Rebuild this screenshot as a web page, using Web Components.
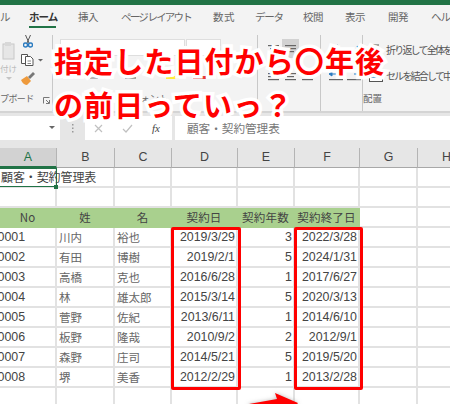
<!DOCTYPE html>
<html lang="ja">
<head>
<meta charset="utf-8">
<style>
  html, body { margin: 0; padding: 0; width: 450px; height: 404px; overflow: hidden; background: #fff; }
  body { font-family: "Noto Sans CJK JP", "Liberation Sans", sans-serif; position: relative; }
</style>
</head>
<body>
  <excel-tabs></excel-tabs>
  <excel-ribbon></excel-ribbon>
  <formula-bar>顧客・契約管理表</formula-bar>
  <excel-sheet></excel-sheet>
  <slide-callout>
    <span>指定した日付から〇年後</span>
    <span>の前日っていっ？</span>
  </slide-callout>
<script>
  const JP = `"Noto Sans CJK JP", "Liberation Sans", sans-serif`;

  class ExcelTabs extends HTMLElement {
    constructor() {
      super();
      this.attachShadow({mode: "open"});
      // [label, gap before, width, letter spacing]
      const tabs = [
        ["ホーム", 19, 27, -1], ["挿入", 22, 20, -.4], ["ページ レイアウト", 23, 68, -1.8], ["数式", 24, 22, .4],
        ["データ", 20, 26, -1.3], ["校閲", 22, 20, -.4], ["表示", 22, 20, -.4], ["開発", 23, 20, -.4], ["ヘルプ", 23, 27, -1]
      ];
      const items = tabs.map(([t, m, w, s], i) =>
        `<span class="${i === 0 ? "on" : ""}" style="margin-left:${m}px;width:${w}px;letter-spacing:${s}px">${t}</span>`).join("");
      this.shadowRoot.innerHTML = `
      <style>
        :host { display: block; height: 33px; box-sizing: border-box; border-top: 5px solid #217346; background: #f3f3f3; }
        nav { display: flex; height: 28px; font: 10.500px ${JP}; color: #666; white-space: nowrap; overflow: hidden; }
        span { position: relative; padding-top: 4px; line-height: 16px; flex: none; }
        .on { font-weight: 700; color: #333; }
        .on::after { content: ""; position: absolute; left: 0; right: 0; top: 21px; height: 2px; background: #217346; }
      </style>
      <nav>
        <span style="margin-left:-10px;width:20px;letter-spacing:-.5px">イル</span>
        ${items}
      </nav>`;
    }
  }
  customElements.define("excel-tabs", ExcelTabs);

  class RibbonGroup extends HTMLElement {
    constructor() {
      super();
      this.attachShadow({mode: "open"});
      this.shadowRoot.innerHTML = `
      <style>
        :host { display: flex; flex-direction: column; flex: none; box-sizing: border-box; height: 76px; border-right: 1px solid #c8c8c8; position: relative; }
        :host([last]) { border-right: 0; }
        .body { flex: 1; display: flex; min-height: 0; overflow: hidden; }
        .label { height: 13px; margin-bottom: 6px; font: 9.500px/13px ${JP}; color: #666; white-space: nowrap; }
      </style>
      <div class="body"><slot></slot></div>
      <div class="label" id="label"></div>`;
    }
    connectedCallback() {
      const label = this.shadowRoot.getElementById("label");
      label.textContent = this.getAttribute("label") || "";
      label.style.cssText += this.getAttribute("label-style") || "";
    }
  }
  customElements.define("ribbon-group", RibbonGroup);

  class ExcelRibbon extends HTMLElement {
    constructor() {
      super();
      this.attachShadow({mode: "open"});
      const line = (x, y, w) => `<rect x="${x}" y="${y}" width="${w}" height="1.2" fill="#666"/>`;
      this.shadowRoot.innerHTML = `
      <style>
        :host { display: flex; height: 80px; box-sizing: border-box; padding-top: 2px; background: #f3f3f3; border-bottom: 2px solid #d4d4d4; overflow: hidden; }
        svg { display: block; flex: none; }
        .clip { display: grid; grid-template-columns: 17px 28px; }
        .paste { display: flex; flex-direction: column; align-items: center; padding: 7px 0 0 0; font: 8.500px/12px ${JP}; color: #bbb; white-space: nowrap; }
        .tools { display: flex; flex-direction: column; gap: 6px; padding: 0 0 0 4px; }
        .launch { position: absolute; left: 43px; top: 62px; }
        .font { display: flex; flex-direction: column; gap: 5px; padding: 4px 0 0 7px; }
        .boxes { display: flex; gap: 1px; }
        .box { height: 15px; background: #fff; border: 1px solid #dedede; }
        .marks { display: flex; align-items: flex-end; margin-top: 9px; }
        .marks i { display: block; width: 13px; height: 3px; background: #ffeb3b; margin-left: 26px; }
        .marks i + i { background: #e53935; margin-left: 14px; }
        .align { display: grid; grid-template-columns: 17px 17px 17px; grid-auto-rows: 19px; row-gap: 9px; padding: 4px 0 0 7px; }
        .align div { display: flex; align-items: center; justify-content: center; }
        .on { background: #d2d2d2; }
        .orient { display: grid; grid-auto-rows: 19px; row-gap: 9px; padding: 4px 0 0 6px; grid-template-columns: 18px 18px; }
        .orient div { display: flex; align-items: center; justify-content: center; }
        .wrap { display: flex; flex-direction: column; gap: 10px; padding: 7px 0 0 6px; font: 10px/16px ${JP}; letter-spacing: -1.800px; color: #555; white-space: nowrap; }
        .wrap div { display: flex; gap: 3px; align-items: center; }
      </style>
      <ribbon-group label="プボード" style="width:53px" label-style="font-size:9px;letter-spacing:-.6px">
        <div class="clip">
          <div class="paste">
            <svg width="14" height="18" viewBox="0 0 14 18"><rect x="1" y="2" width="11" height="15" fill="#e6e6e6" stroke="#c8c8c8"/><rect x="3" y="0" width="6" height="4" fill="#d8d8d8"/></svg>
            <span style="margin-top:2px">付け</span>
            <svg width="6" height="4" viewBox="0 0 6 4" style="margin-top:3px"><path d="M0 0h6L3 3z" fill="#c4c4c4"/></svg>
          </div>
          <div class="tools">
            <svg width="10" height="13" viewBox="0 0 10 13" style="margin-left:2px"><path d="M2.500 0l3.500 8M7.500 0L4 8" stroke="#555" stroke-width="1" fill="none"/><circle cx="2.500" cy="10" r="2" fill="none" stroke="#2a7bc0" stroke-width="1.400"/><circle cx="7.500" cy="10" r="2" fill="none" stroke="#2a7bc0" stroke-width="1.400"/></svg>
            <svg width="22" height="12" viewBox="0 0 22 12"><path d="M.5.5h6v9h-6z" fill="#fff" stroke="#555"/><path d="M4.500 2.500h5l2.500 2.500v6.500h-7.500z" fill="#fff" stroke="#555"/><path d="M6.500 7h3.500M6.500 9.500h3.500" stroke="#888"/><path d="M17 5h5l-2.500 2.500z" fill="#666"/></svg>
            <svg width="14" height="13" viewBox="0 0 14 13"><path d="M0 8l6-4 4 5-4 4C4 13 1 11 0 8z" fill="#ee9a3c"/><path d="M7 5l5-5 2 2-5 5z" fill="#777"/></svg>
          </div>
        </div>
        <svg class="launch" width="7" height="7" viewBox="0 0 7 7"><path d="M.5 6.500v-6h6M6.500 3v3.500H3M3 3l3 3" fill="none" stroke="#777"/></svg>
      </ribbon-group>
      <ribbon-group label="ォント" style="width:205px" label-style="padding-left:87px">
        <div class="font">
          <div class="boxes">
            <div class="box" style="width:123px"></div>
            <div class="box" style="width:33px"></div>
          </div>
          <div class="marks">
            <svg width="80" height="9" viewBox="0 0 80 9"><path d="M3 7h8M30 8h8" stroke="#777"/><path d="M47 2h5l-2.500 2.500z" fill="#666"/><path d="M65.500 1.500h10v6h-10z" fill="none" stroke="#aaa"/><path d="M65 8h11" stroke="#555"/></svg>
            <i></i><i></i>
          </div>
        </div>
      </ribbon-group>
      <ribbon-group style="width:63px">
        <div class="align">
          <div><svg width="11" height="8" viewBox="0 0 11 8">${line(0,0,11)}${line(2,3,7)}${line(0,6,11)}</svg></div>
          <div class="on"><svg width="11" height="8" viewBox="0 0 11 8">${line(0,0,11)}${line(0,3,11)}${line(2,6,7)}</svg></div>
          <div></div>
          <div><svg width="11" height="8" viewBox="0 0 11 8">${line(0,0,11)}${line(0,3,7)}${line(0,6,11)}</svg></div>
          <div><svg width="11" height="8" viewBox="0 0 11 8">${line(0,0,11)}${line(2,3,7)}${line(0,6,11)}</svg></div>
          <div><svg width="11" height="8" viewBox="0 0 11 8">${line(0,0,11)}${line(4,3,7)}${line(0,6,11)}</svg></div>
        </div>
      </ribbon-group>
      <ribbon-group style="width:42px">
        <div class="orient">
          <div><svg width="14" height="12" viewBox="0 0 14 12"><path d="M1 10L9 2" stroke="#2a7bc0" stroke-width="1.200"/><path d="M2 6l3-4 2 5" fill="none" stroke="#777"/></svg></div>
          <div><svg width="10" height="8" viewBox="0 0 10 8"><path d="M0 4h5M8 1l2 3-2 3" stroke="#2a7bc0" stroke-width="1.200" fill="none"/></svg></div>
          <div><svg width="14" height="9" viewBox="0 0 14 9"><path d="M0 2l3-2v4zM3 2h4" fill="#2a7bc0" stroke="#2a7bc0"/>${line(0,7,14)}</svg></div>
          <div><svg width="14" height="9" viewBox="0 0 14 9"><path d="M14 2l-3-2v4zM11 2H7" fill="#2a7bc0" stroke="#2a7bc0"/>${line(0,7,14)}</svg></div>
        </div>
      </ribbon-group>
      <ribbon-group last label="配置" style="width:87px">
        <div class="wrap">
          <div><svg width="14" height="14" viewBox="0 0 14 14"><path d="M1 2h9M1 6h10c3 0 3 5 0 5H8" fill="none" stroke="#555"/><path d="M9 9l-2 2 2 2" fill="none" stroke="#2a7bc0"/></svg>折り返して全体を</div>
          <div><svg width="14" height="12" viewBox="0 0 14 12"><rect x=".5" y="3.500" width="13" height="8" fill="#fff" stroke="#555"/><path d="M2 7h10" stroke="#2a7bc0" stroke-width="1.400"/></svg>セルを結合して中</div>
        </div>
      </ribbon-group>`;
    }
  }
  customElements.define("excel-ribbon", ExcelRibbon);

  class FormulaBar extends HTMLElement {
    constructor() {
      super();
      this.attachShadow({mode: "open"});
      this.shadowRoot.innerHTML = `
      <style>
        :host { display: flex; height: 35px; box-sizing: border-box; padding: 3px 0 8px; background: #e6e6e6; color: #777; font: 11.600px/24px ${JP}; }
        .name { width: 60px; background: #fff; display: flex; align-items: center; justify-content: flex-end; padding-right: 5px; box-sizing: border-box; }
        .dots { width: 25px; display: flex; align-items: center; justify-content: center; }
        .fn { width: 87px; margin-right: 3px; background: #fff; display: flex; align-items: center; padding-left: 9px; box-sizing: border-box; gap: 19px; }
        .fn svg { flex: none; }
        .fx { font: italic 11px "Liberation Serif", serif; color: #444; }
        .text { flex: 1; background: #fff; padding-left: 12px; white-space: nowrap; overflow: hidden; }
      </style>
      <div class="name"><svg width="6" height="4" viewBox="0 0 6 4"><path d="M0 0h6L3 3z" fill="#666"/></svg></div>
      <div class="dots"><svg width="2" height="9" viewBox="0 0 2 9"><path d="M0 0h1.500v1.500H0zM0 3.500h1.500V5H0zM0 7h1.500v1.500H0z" fill="#999"/></svg></div>
      <div class="fn">
        <svg width="9" height="9" viewBox="0 0 9 9"><path d="M1 1l7 7M8 1L1 8" stroke="#c0c0c0" stroke-width="1.200"/></svg>
        <svg width="11" height="9" viewBox="0 0 11 9"><path d="M1 5l3 3 6-7" fill="none" stroke="#c0c0c0" stroke-width="1.200"/></svg>
        <span class="fx">fx</span>
      </div>
      <div class="text"><slot></slot></div>`;
    }
  }
  customElements.define("formula-bar", FormulaBar);

  const ROWS = [
    ["0001", "川内", "裕也", "2019/3/29", 3, "2022/3/28"],
    ["0002", "有田", "博樹", "2019/2/1", 5, "2024/1/31"],
    ["0003", "高橋", "克也", "2016/6/28", 1, "2017/6/27"],
    ["0004", "林", "雄太郎", "2015/3/14", 5, "2020/3/13"],
    ["0005", "菅野", "佐紀", "2013/6/11", 1, "2014/6/10"],
    ["0006", "板野", "隆哉", "2010/9/2", 2, "2012/9/1"],
    ["0007", "森野", "庄司", "2014/5/21", 5, "2019/5/20"],
    ["0008", "堺", "美香", "2012/2/29", 1, "2013/2/28"]
  ];

  class ExcelSheet extends HTMLElement {
    constructor() {
      super();
      this.attachShadow({mode: "open"});
      const cell = (text, cls = "") => `<div class="c ${cls}">${text}</div>`;
      let html = "";
      for (const h of "ABCDEFGH") html += `<div class="h ${h === "A" ? "sel" : ""}">${h}</div>`;
      html += cell(`<span class="over">顧客・契約管理表</span>`, "first") + cell("").repeat(7);
      html += cell("").repeat(8);
      for (const t of ["No", "姓", "名", "契約日", "契約年数", "契約終了日"]) html += cell(t, "band");
      html += cell("").repeat(2);
      for (const r of ROWS) {
        html += cell(r[0], "id") + cell(r[1], "jp") + cell(r[2], "jp");
        html += cell(r[3], "num") + cell(r[4], "num") + cell(r[5], "num");
        html += cell("").repeat(2);
      }
      html += cell("").repeat(8);
      this.shadowRoot.innerHTML = `
      <style>
        :host { display: block; height: 256px; overflow: hidden; background: #fff; position: relative; }
        .grid { display: grid; grid-template-columns: 57px 58px 57px 66px 57px 65px 58px 58px; grid-auto-rows: 20px; font: 12.400px/18px "Liberation Sans", ${JP}; color: #444; }
        .h { background: #e6e6e6; border-right: 1px solid #b4b4b4; border-bottom: 1px solid #a8a8a8; box-sizing: border-box; text-align: center; line-height: 19px; color: #444; }
        .h.sel { background: #d2d2d2; color: #217346; border-bottom: 2px solid #217346; }
        .c { box-sizing: border-box; border-right: 2px solid #e2e2e2; border-bottom: 2px solid #e2e2e2; padding: 0 2px; white-space: nowrap; overflow: hidden; }
        .first { overflow: visible; position: relative; padding: 0 0 0 1px; font-family: ${JP}; }
        .first::after { content: ""; position: absolute; left: -2px; right: -2px; top: 0; bottom: -1px; border: 1.500px solid #217346; pointer-events: none; }
        .first::before { content: ""; position: absolute; right: -3px; bottom: -3px; width: 4px; height: 4px; background: #217346; z-index: 3; }
        .over { position: relative; z-index: 2; letter-spacing: -.1px; font-size: 12px; }
        .band { background: #a9d08e; border-color: #a9d08e; text-align: center; font-family: ${JP}; font-size: 11.500px; padding: 0; letter-spacing: .2px; }
        .id { padding: 0; text-indent: -2.500px; }
        .jp { font-family: ${JP}; font-size: 11.500px; color: #666; }
        .num { text-align: right; padding-right: 1px; }
        .overlay { position: absolute; inset: 0; pointer-events: none; }
        .overlay.grid { grid-template-rows: repeat(13, 20px); }
        .mark { border: 3px solid #f00; border-radius: 2px; margin: -1px -3px -2px -1px; }
      </style>
      <div class="grid">${html}</div>
      <div class="grid overlay">
        <div class="mark" style="grid-column:4;grid-row:5/13"></div>
        <div class="mark" style="grid-column:6;grid-row:5/13"></div>
      </div>`;
    }
  }
  customElements.define("excel-sheet", ExcelSheet);

  class SlideCallout extends HTMLElement {
    constructor() {
      super();
      this.attachShadow({mode: "open"});
      this.shadowRoot.innerHTML = `
      <style>
        :host { position: absolute; left: 0; top: 0; width: 450px; height: 404px; overflow: hidden; pointer-events: none;
          display: flex; flex-direction: column; gap: 4px; padding: 40px 0 0 54px; box-sizing: border-box; }
        ::slotted(span) { display: block; font: 700 29px/40px ${JP}; letter-spacing: 1.100px; color: #f00; white-space: nowrap;
          -webkit-text-stroke: 7px #fff; paint-order: stroke fill; }
        svg { position: absolute; left: 246px; top: 388px; filter: drop-shadow(0 0 2px rgba(120,120,120,.5)); }
      </style>
      <slot></slot>
      <svg width="60" height="20" viewBox="0 0 60 20"><path d="M3 16L31 11 29 5 52 15 48 20H3z" fill="#f00"/></svg>`;
    }
  }
  customElements.define("slide-callout", SlideCallout);
</script>
</body>
</html>
